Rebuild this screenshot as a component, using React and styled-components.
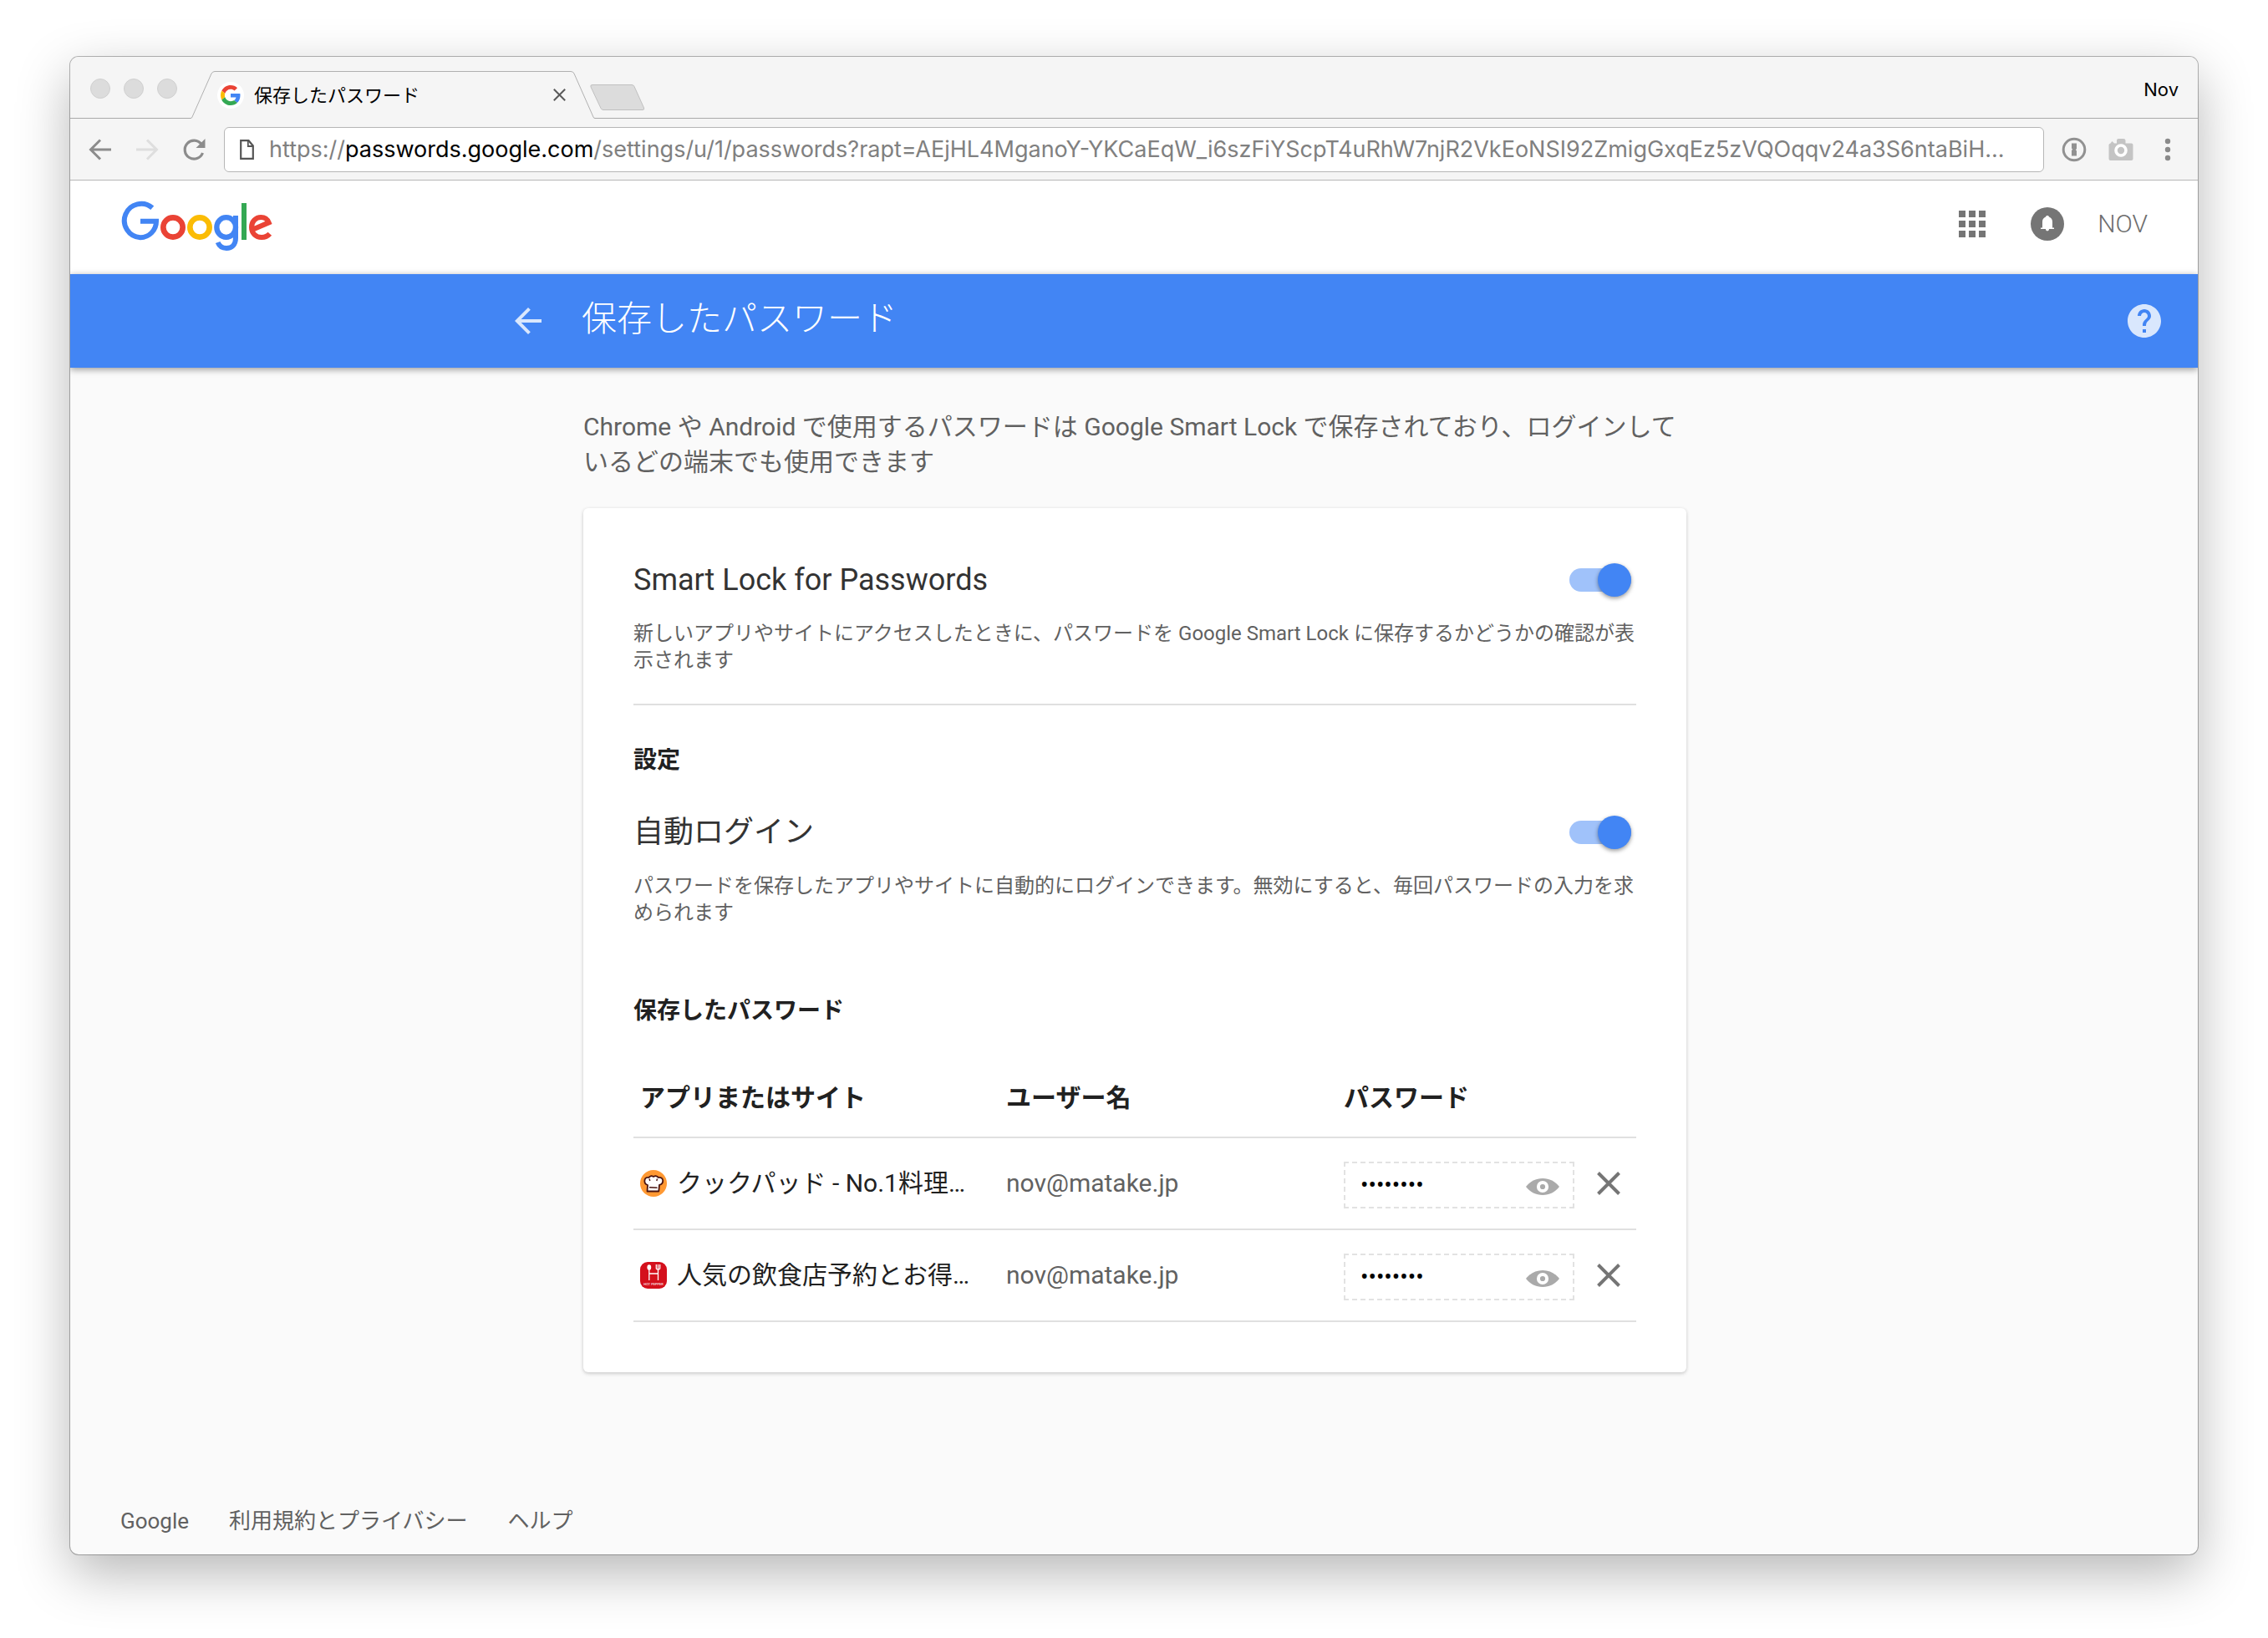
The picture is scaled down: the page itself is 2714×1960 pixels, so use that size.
import React, { useState } from 'react';
import styled, { createGlobalStyle } from 'styled-components';

const sans = "Roboto, 'Noto Sans CJK JP', sans-serif";
const chromeSans = "Inter, 'Noto Sans CJK JP', sans-serif";

const GlobalStyle = createGlobalStyle`
  *, *::before, *::after { box-sizing: border-box; }
  body { margin: 0; background: #fff; font-family: ${sans}; color: #212121; }
  button { border: 0; padding: 0; background: none; font: inherit; color: inherit; cursor: pointer; }
  a { color: inherit; text-decoration: none; }
  h1, h2, h3, p { margin: 0; }
  svg { display: block; }
`;

const Desktop = styled.div`
  min-height: 100vh;
  padding: 68px 84px 100px;
  display: flex;
  flex-direction: column;
`;

const BrowserWindow = styled.div`
  flex: 1;
  display: flex;
  flex-direction: column;
  border-radius: 10px;
  overflow: hidden;
  background: #fafafa;
  box-shadow: 0 0 0 1px rgba(0, 0, 0, 0.28), 0 22px 64px rgba(0, 0, 0, 0.29);
`;

const TabStrip = styled.div`
  display: flex;
  align-items: flex-end;
  height: 74px;
  padding: 0 23px 0 24px;
  background: #f5f5f5;
  border-bottom: 1px solid #a9a9a9;
  font-family: ${chromeSans};
  font-size: 22px;
  line-height: 28px;
  color: #000;
`;

const Lights = styled.div`
  display: flex;
  gap: 16px;
  margin: 0 16px 23px 0;
`;

const Light = styled.button`
  width: 24px;
  height: 24px;
  border-radius: 50%;
  background: #dcdcdc;
  border: 1px solid #d0d0d0;
`;

const Tab = styled.div`
  position: relative;
  display: flex;
  align-items: center;
  gap: 12px;
  width: 484px;
  height: 57px;
  margin-bottom: -1px;
  padding: 0 30px 0 32px;
`;

const TabShape = styled.svg`
  position: absolute;
  inset: 0;
  width: 100%;
  height: 100%;
`;

const Favicon = styled.span`
  position: relative;
  display: grid;
  place-items: center;
  width: 32px;
  height: 32px;
  border-radius: 50%;
  background: #fff;
`;

const TabTitle = styled.span`
  position: relative;
  flex: 1;
`;

const TabClose = styled.button`
  position: relative;
  width: 20px;
  height: 20px;
`;

const NewTab = styled.button`
  margin: 0 auto 9px -6px;
`;

const Profile = styled.button`
  margin-bottom: 20px;
`;

const Toolbar = styled.div`
  display: flex;
  align-items: center;
  gap: 16px;
  height: 74px;
  padding: 0 16px;
  background: #f5f5f5;
  border-bottom: 1px solid #b6b6b6;
`;

const ToolButton = styled.button`
  display: grid;
  place-items: center;
  flex: none;
  width: 40px;
  height: 40px;
`;

const AddressBar = styled.div`
  flex: 1;
  min-width: 0;
  display: flex;
  align-items: center;
  gap: 18px;
  height: 54px;
  padding: 0 8px 0 18px;
  background: #fff;
  border: 1px solid #b6b6b6;
  border-radius: 6px;
  font-family: ${chromeSans};
  font-size: 27px;
  color: #808080;
`;

const Url = styled.div`
  min-width: 0;
  white-space: nowrap;
  overflow: hidden;
`;

const Host = styled.span`
  color: #000;
`;

const AccountBar = styled.header`
  display: flex;
  align-items: center;
  justify-content: space-between;
  height: 112px;
  padding: 0 60px 4px;
  background: #fff;
`;

const AccountActions = styled.nav`
  display: flex;
  align-items: center;
  gap: 40px;
  padding-bottom: 4px;
`;

const IconButton = styled.button`
  display: grid;
  place-items: center;
  width: ${(p) => p.$width || 40}px;
  height: 48px;
`;

const Account = styled.button`
  font-size: 30px;
  line-height: 40px;
  font-weight: 300;
  color: #6e6e6e;
`;

const TitleBar = styled.div`
  position: relative;
  display: grid;
  grid-template-columns: 1fr minmax(0, 1322px) 1fr;
  align-items: center;
  height: 112px;
  padding: 0;
  background: #4285f4;
  color: #fff;
  box-shadow: 0 2px 8px rgba(0, 0, 0, 0.4);
`;

const TitleAction = styled.button`
  width: 48px;
  height: 48px;
  margin: 0 40px;
  justify-self: end;
  color: rgba(255, 255, 255, 0.8);
`;

const PageTitle = styled.h1`
  padding-bottom: 4px;
  font-size: 42px;
  line-height: 56px;
  font-weight: 300;
`;

const Content = styled.main`
  flex: 1;
  width: 100%;
  max-width: 1322px;
  margin: 0 auto;
  padding: 50px 0 60px 2px;
`;

const Intro = styled.p`
  margin-bottom: 34px;
  font-size: 30px;
  line-height: 42px;
  color: #616161;
`;

const Card = styled.section`
  padding: 60px;
  background: #fff;
  border-radius: 6px;
  box-shadow: 0 2px 4px rgba(0, 0, 0, 0.16), 0 0 4px rgba(0, 0, 0, 0.06);
`;

const Setting = styled.div`
  display: grid;
  grid-template-columns: 1fr auto;
  align-items: center;
  row-gap: 22px;
`;

const SettingName = styled.label`
  font-size: 36px;
  line-height: 52px;
  color: #333;
`;

const Switch = styled.input`
  appearance: none;
  display: flex;
  align-items: center;
  justify-content: ${(p) => (p.checked ? 'flex-end' : 'flex-start')};
  width: 74px;
  height: 28px;
  margin: 0 6px 0 0;
  border-radius: 14px;
  background: ${(p) => (p.checked ? '#a0c2fa' : '#bdbdbd')};
  cursor: pointer;

  &::before {
    content: '';
    flex: none;
    width: 40px;
    height: 40px;
    border-radius: 50%;
    background: ${(p) => (p.checked ? '#4285f4' : '#fafafa')};
    box-shadow: 0 2px 5px rgba(0, 0, 0, 0.4);
  }
`;

const SettingText = styled.p`
  grid-column: 1 / -1;
  font-size: 24px;
  line-height: 32px;
  color: #616161;
`;

const Divider = styled.hr`
  height: 2px;
  margin: 36px 0 46px;
  border: 0;
  background: #e0e0e0;
`;

const SectionTitle = styled.h2`
  margin: ${(p) => p.$margin};
  font-size: 28px;
  line-height: 40px;
  font-weight: 700;
`;

const Table = styled.table`
  width: 100%;
  table-layout: fixed;
  border-collapse: separate;
  border-spacing: 0;
  font-size: 30px;
  line-height: 40px;
`;

const Column = styled.col`
  width: ${(p) => p.$width};
`;

const HeadCell = styled.th`
  height: 98px;
  padding: 4px 8px 0;
  text-align: left;
  font-weight: 700;
  border-bottom: 2px solid #e0e0e0;
`;

const Cell = styled.td`
  height: 110px;
  padding: 0 8px;
  border-bottom: 2px solid #e0e0e0;
  color: ${(p) => (p.$muted ? '#616161' : '#212121')};
`;

const Site = styled.a`
  display: flex;
  align-items: center;
  gap: 12px;
  white-space: nowrap;
`;

const SecretBox = styled.div`
  display: flex;
  align-items: center;
  justify-content: space-between;
  height: 56px;
  margin-top: 4px;
  padding: 0 16px 0 18px;
  border: 2px dashed #e2e2e2;
`;

const Secret = styled.input`
  width: 120px;
  padding: 0;
  border: 0;
  background: none;
  font-family: ${sans};
  font-size: 28px;
  line-height: 36px;
  color: #000;
  outline: 0;
`;

const RevealButton = styled.button`
  padding-top: 4px;
`;

const RemoveButton = styled.button`
  display: block;
  margin: 0 auto;
`;

const Footer = styled.footer`
  display: flex;
  gap: 48px;
  padding: 0 60px 20px;
  font-size: 26px;
  line-height: 40px;
  color: #616161;
`;

const GoogleMark = () => (
  <svg width="24" height="24" viewBox="0 0 48 48" aria-hidden="true">
    <path fill="#EA4335" d="M24 9.5c3.54 0 6.71 1.22 9.21 3.6l6.85-6.85C35.9 2.38 30.47 0 24 0 14.62 0 6.51 5.38 2.56 13.22l7.98 6.19C12.43 13.72 17.74 9.5 24 9.5z" />
    <path fill="#4285F4" d="M46.98 24.55c0-1.57-.15-3.09-.38-4.55H24v9.02h12.94c-.58 2.96-2.26 5.48-4.78 7.18l7.73 6c4.51-4.18 7.09-10.36 7.09-17.65z" />
    <path fill="#FBBC05" d="M10.53 28.59c-.48-1.45-.76-2.99-.76-4.59s.27-3.14.76-4.59l-7.98-6.19C.92 16.46 0 20.12 0 24c0 3.88.92 7.54 2.56 10.78l7.97-6.19z" />
    <path fill="#34A853" d="M24 48c6.48 0 11.93-2.13 15.89-5.81l-7.73-6c-2.15 1.45-4.92 2.3-8.16 2.3-6.26 0-11.57-4.22-13.47-9.91l-7.98 6.19C6.51 42.62 14.62 48 24 48z" />
  </svg>
);

const GoogleLogo = () => (
  <svg width="183" height="61" viewBox="24 24 549 183" fill="none" strokeWidth="18" role="img" aria-label="Google">
    <path stroke="#4285F4" d="M138.8 50.5A60.5 60.5 0 1 0 96 156.500A57 58 0 0 0 153 98.500H96" />
    <circle stroke="#EA4335" strokeWidth="20" cx="213" cy="120" r="35" />
    <circle stroke="#FBBC05" strokeWidth="20" cx="309" cy="120" r="35" />
    <ellipse stroke="#4285F4" strokeWidth="19" cx="404" cy="120" rx="34" ry="35.500" />
    <path stroke="#4285F4" d="M438 78V158C438 182 424 195 405 195C390 195 379 187 374 174" />
    <path stroke="#34A853" d="M468 33V165" />
    <path stroke="#EA4335" d="M560.500 143.500C554 151 543 156 531 156C510 156 495 141 495 120C495 99 510 84 529 84C542 84 552 91 557 103L502 127" />
  </svg>
);

const BackIcon = ({ size = 48 }) => (
  <svg width={size} height={size} viewBox="0 0 24 24" fill="currentColor" aria-hidden="true">
    <path d="M20 11H7.83l5.59-5.59L12 4l-8 8 8 8 1.410-1.410L7.830 13H20v-2z" />
  </svg>
);

const ArrowIcon = ({ color, forward }) => (
  <svg width="28" height="28" viewBox="0 0 28 28" fill="none" stroke={color} strokeWidth="3" aria-hidden="true">
    <path d={forward ? 'M1 14H25M14 2.500L25.500 14L14 25.500' : 'M27 14H3M14 2.500L2.500 14L14 25.500'} />
  </svg>
);

const ReloadIcon = () => (
  <svg width="28" height="28" viewBox="0 0 28 28" aria-hidden="true">
    <path d="M23 7.500A11 11 0 1 0 24.500 18" fill="none" stroke="#8c8c8c" strokeWidth="3.200" />
    <path d="M27.500 1V12H16.500z" fill="#8c8c8c" />
  </svg>
);

const PageIcon = () => (
  <svg width="17" height="24" viewBox="0 0 17 24" fill="none" stroke="#555" strokeWidth="2.200" aria-hidden="true">
    <path d="M1.200 1.200H10.500L15.800 7.500V22.800H1.200z" />
    <path d="M9.800 1.500V8H15.500" strokeWidth="1.800" />
  </svg>
);

const KeyholeIcon = () => (
  <svg width="30" height="30" viewBox="0 0 30 30" aria-hidden="true">
    <circle cx="15" cy="15" r="12.800" fill="#f5f5f5" stroke="#919191" strokeWidth="3" />
    <path d="M12 7.500H18V14L16.800 15.200L18 16.400V22.500H12V16L13.200 14.800L12 13.600z" fill="#919191" />
  </svg>
);

const CameraIcon = () => (
  <svg width="30" height="28" viewBox="0 0 30 28" aria-hidden="true">
    <path d="M2.500 6.500L4.500 4L7 6.500H10V3Q10 1 12 1H18Q20.500 1 20.500 3V6.500H27.500Q29.500 6.500 29.500 8.500V25Q29.500 27 27.500 27H2.500Q.500 27 .500 25V8.500Q.500 6.800 2.500 6.500z" fill="#c4c4c4" />
    <circle cx="15" cy="15" r="6" fill="#c4c4c4" stroke="#fff" strokeWidth="3.600" />
  </svg>
);

const DotsIcon = () => (
  <svg width="8" height="28" viewBox="0 0 8 28" fill="#8a8a8a" aria-hidden="true">
    {[4, 14, 24].map((y) => <circle key={y} cx="4" cy={y} r="3.200" />)}
  </svg>
);

const AppsIcon = () => (
  <svg width="32" height="32" viewBox="0 0 32 32" fill="#757575" aria-hidden="true">
    {[0, 12, 24].map((y) => [0, 12, 24].map((x) => <rect key={`${x}-${y}`} x={x} y={y} width="8" height="8" />))}
  </svg>
);

const BellIcon = () => (
  <svg width="40" height="40" viewBox="0 0 40 40" aria-hidden="true">
    <circle cx="20" cy="20" r="20" fill="#757575" />
    <path fill="#fff" d="M12 26V24.500H14V17.500C14 14.500 15.500 12.500 18 11.600C18 10.600 18.900 10 20 10C21.100 10 22 10.600 22 11.600C24.500 12.500 26 14.500 26 17.500V24.500H28V26H22C22 27.500 21.200 28.300 20 28.300C18.800 28.300 18 27.500 18 26z" />
  </svg>
);

const HelpIcon = () => (
  <svg width="48" height="48" viewBox="0 0 24 24" fill="currentColor" aria-hidden="true">
    <path d="M12 2C6.480 2 2 6.480 2 12s4.480 10 10 10 10-4.480 10-10S17.520 2 12 2zm1 17h-2v-2h2v2zm2.070-7.750l-.9.920C13.450 12.900 13 13.500 13 15h-2v-.5c0-1.100.450-2.100 1.170-2.830l1.240-1.260c.370-.360.590-.860.590-1.410 0-1.100-.9-2-2-2s-2 .9-2 2H8c0-2.210 1.790-4 4-4s4 1.790 4 4c0 .880-.360 1.680-.930 2.250z" />
  </svg>
);

const EyeIcon = () => (
  <svg width="40" height="20" viewBox="0 0 40 20" aria-hidden="true">
    <path d="M0 10C5 3.500 12 0 20 0S35 3.500 40 10C35 16.500 28 20 20 20S5 16.500 0 10z" fill="#aaa" />
    <circle cx="20" cy="10" r="5.100" fill="#aaa" stroke="#fff" strokeWidth="4" />
  </svg>
);

const CrossIcon = ({ size, stroke, color }) => (
  <svg width={size} height={size} viewBox="0 0 28 28" fill="none" stroke={color} strokeWidth={stroke} aria-hidden="true">
    <path d="M1.500 1.500L26.500 26.500M26.500 1.500L1.500 26.500" />
  </svg>
);

const ChefIcon = () => (
  <svg width="32" height="32" viewBox="0 0 32 32" aria-hidden="true">
    <circle cx="16" cy="16" r="16" fill="#ff9933" />
    <path d="M8.500 25.500L9 18C6 17 5 14.500 5.500 12C6 9.500 8.500 8.300 10.500 9C11.500 7.300 13.500 6.500 16 8C18.500 6.500 20.800 7.300 21.800 9C24.500 8.300 27 9.800 27.200 12.500C27.300 15.500 25.500 17.500 23 17.800L22.300 25.500z" fill="#fff" stroke="#4a1410" strokeWidth="1.800" strokeLinejoin="round" />
    <path d="M11 20.800L20.500 21.200M11 10.500L11.800 13M20.500 10.500L19.800 13" fill="none" stroke="#4a1410" strokeWidth="1.400" />
  </svg>
);

const DinerText = styled.text`
  font: 400 4px ${sans};
  fill: #fff;
`;

const DinerIcon = () => (
  <svg width="32" height="32" viewBox="0 0 32 32" aria-hidden="true">
    <rect width="32" height="32" rx="9" fill="#d4101c" />
    <ellipse cx="10.800" cy="6.500" rx="2.400" ry="3.200" fill="#fff" />
    <path d="M10.800 8V22M21.500 9V22M10.800 14H21.500M19.300 3V7.500Q19.300 9 21.500 9T23.700 7.500V3M21.500 3V9" fill="none" stroke="#fff" strokeWidth="1.300" />
    <DinerText x="16" y="28" textAnchor="middle">HOT PEPPER</DinerText>
  </svg>
);

const sites = [
  { id: 'cookpad', name: 'クックパッド - No.1料理…', user: 'nov@matake.jp', Icon: ChefIcon },
  { id: 'diner', name: '人気の飲食店予約とお得…', user: 'nov@matake.jp', Icon: DinerIcon },
];

function ToggleSetting({ id, name, children }) {
  const [on, setOn] = useState(true);
  return (
    <Setting>
      <SettingName htmlFor={id}>{name}</SettingName>
      <Switch id={id} type="checkbox" role="switch" checked={on} onChange={() => setOn(!on)} />
      <SettingText>{children}</SettingText>
    </Setting>
  );
}

export default function App() {
  return (
    <Desktop lang="ja">
      <GlobalStyle />
      <BrowserWindow>
        <TabStrip>
          <Lights>
            <Light aria-label="閉じる" />
            <Light aria-label="最小化" />
            <Light aria-label="最大化" />
          </Lights>
          <Tab>
            <TabShape viewBox="0 0 484 57" preserveAspectRatio="none" aria-hidden="true">
              <path d="M0 57L1 56L25 3Q26.500 .500 29 .500H455Q458 .500 459 3L482.500 56L484 57z" fill="#f5f5f5" />
              <path d="M0 56.500Q1.500 56.500 2 55L25 3Q26.500 .500 29 .500H455Q458 .500 459 3L482 55Q482.500 56.500 484 56.500" fill="none" stroke="#b0b0b0" />
            </TabShape>
            <Favicon><GoogleMark /></Favicon>
            <TabTitle>保存したパスワード</TabTitle>
            <TabClose aria-label="タブを閉じる"><CrossIcon size={15} stroke={3.8} color="#5a5a5a" /></TabClose>
          </Tab>
          <NewTab aria-label="新しいタブ">
            <svg width="66" height="31" viewBox="0 0 66 31" aria-hidden="true">
              <path d="M3 .500H50Q52 .500 53 2.500L64.500 28Q65.500 30.500 63 30.500H16Q14 30.500 13 28.500L1 3Q0 .500 3 .500z" fill="#dcdcdc" stroke="#c0c0c0" />
            </svg>
          </NewTab>
          <Profile>Nov</Profile>
        </TabStrip>

        <Toolbar>
          <ToolButton aria-label="戻る"><ArrowIcon color="#8c8c8c" /></ToolButton>
          <ToolButton aria-label="進む"><ArrowIcon color="#dedede" forward /></ToolButton>
          <ToolButton aria-label="再読み込み"><ReloadIcon /></ToolButton>
          <AddressBar>
            <PageIcon />
            <Url role="textbox" aria-label="アドレス" tabIndex={0}>
              https://<Host>passwords.google.com</Host>/settings/u/1/passwords?rapt=AEjHL4MganoY-YKCaEqW_i6szFiYScpT4uRhW7njR2VkEoNSI92ZmigGxqEz5zVQOqqv24a3S6ntaBiH...
            </Url>
          </AddressBar>
          <ToolButton aria-label="パスワード管理"><KeyholeIcon /></ToolButton>
          <ToolButton aria-label="スクリーンショット"><CameraIcon /></ToolButton>
          <ToolButton aria-label="メニュー"><DotsIcon /></ToolButton>
        </Toolbar>

        <AccountBar>
          <a href="#google"><GoogleLogo /></a>
          <AccountActions>
            <IconButton $width={60} aria-label="アプリ"><AppsIcon /></IconButton>
            <IconButton aria-label="通知"><BellIcon /></IconButton>
            <Account>NOV</Account>
          </AccountActions>
        </AccountBar>

        <TitleBar>
          <TitleAction aria-label="前のページ"><BackIcon /></TitleAction>
          <PageTitle>保存したパスワード</PageTitle>
          <TitleAction aria-label="ヘルプ"><HelpIcon /></TitleAction>
        </TitleBar>

        <Content>
          <Intro>Chrome や Android で使用するパスワードは Google Smart Lock で保存されており、ログインしているどの端末でも使用できます</Intro>
          <Card>
            <ToggleSetting id="smart-lock" name="Smart Lock for Passwords">
              新しいアプリやサイトにアクセスしたときに、パスワードを Google Smart Lock に保存するかどうかの確認が表示されます
            </ToggleSetting>
            <Divider />
            <SectionTitle $margin="0 0 40px">設定</SectionTitle>
            <ToggleSetting id="auto-login" name="自動ログイン">
              パスワードを保存したアプリやサイトに自動的にログインできます。無効にすると、毎回パスワードの入力を求められます
            </ToggleSetting>
            <SectionTitle $margin="82px 0 34px">保存したパスワード</SectionTitle>
            <Table>
              <colgroup>
                <Column />
                <Column $width="404px" />
                <Column $width="292px" />
                <Column $width="66px" />
              </colgroup>
              <thead>
                <tr>
                  <HeadCell scope="col">アプリまたはサイト</HeadCell>
                  <HeadCell scope="col">ユーザー名</HeadCell>
                  <HeadCell scope="col">パスワード</HeadCell>
                  <HeadCell as="td" />
                </tr>
              </thead>
              <tbody>
                {sites.map(({ id, name, user, Icon }) => (
                  <tr key={id}>
                    <Cell><Site href={`#${id}`}><Icon />{name}</Site></Cell>
                    <Cell $muted>{user}</Cell>
                    <Cell>
                      <SecretBox>
                        <Secret type="password" value="password" readOnly aria-label={`${name} のパスワード`} />
                        <RevealButton type="button" aria-label="パスワードを表示"><EyeIcon /></RevealButton>
                      </SecretBox>
                    </Cell>
                    <Cell>
                      <RemoveButton aria-label="削除"><CrossIcon size={28} stroke={4} color="#757575" /></RemoveButton>
                    </Cell>
                  </tr>
                ))}
              </tbody>
            </Table>
          </Card>
        </Content>

        <Footer>
          <a href="#about">Google</a>
          <a href="#terms">利用規約とプライバシー</a>
          <a href="#help">ヘルプ</a>
        </Footer>
      </BrowserWindow>
    </Desktop>
  );
}
